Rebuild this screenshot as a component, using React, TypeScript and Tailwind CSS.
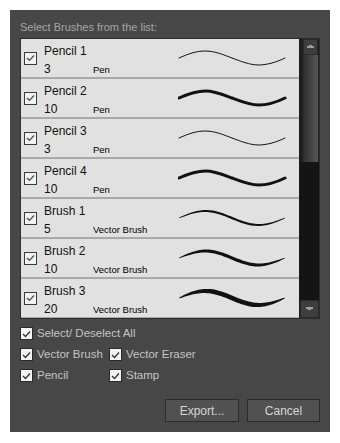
import React from "react";

type Brush = {
  name: string;
  size: number;
  kind: string;
  width: number;
  taper: boolean;
};

const brushes: Brush[] = [
  { name: "Pencil 1", size: 3, kind: "Pen", width: 1, taper: false },
  { name: "Pencil 2", size: 10, kind: "Pen", width: 3, taper: false },
  { name: "Pencil 3", size: 3, kind: "Pen", width: 1, taper: false },
  { name: "Pencil 4", size: 10, kind: "Pen", width: 3, taper: false },
  { name: "Brush 1", size: 5, kind: "Vector Brush", width: 1.8, taper: true },
  { name: "Brush 2", size: 10, kind: "Vector Brush", width: 3, taper: true },
  { name: "Brush 3", size: 20, kind: "Vector Brush", width: 4.5, taper: true },
];

const font = { fontFamily: '"Liberation Sans", Arial, sans-serif' };

// sine stroke, tapered for vector brushes
function Stroke({ width, taper }: { width: number; taper: boolean }) {
  const W = 108;
  const mid = 10;
  const amp = 7;
  if (!taper) {
    return (
      <svg width={110} height={20} viewBox="0 0 110 20">
        <path
          d="M1 10 C10 6 18 3 27.5 3 S46 7 54 10 S72 17 80.5 17 S99 14 107 10"
          fill="none"
          stroke="#111"
          strokeWidth={width}
          strokeLinecap="round"
        />
      </svg>
    );
  }
  const top: string[] = [];
  const bot: string[] = [];
  const n = 60;
  for (let i = 0; i <= n; i++) {
    const t = i / n;
    const x = 1 + t * (W - 2);
    const y = mid - amp * Math.sin(2 * Math.PI * t);
    const h = (width / 2) * Math.pow(Math.sin(Math.PI * t), 0.6) + 0.25;
    top.push(`${x.toFixed(2)},${(y - h).toFixed(2)}`);
    bot.unshift(`${x.toFixed(2)},${(y + h).toFixed(2)}`);
  }
  return (
    <svg width={110} height={20} viewBox="0 0 110 20">
      <polygon points={[...top, ...bot].join(" ")} fill="#111" />
    </svg>
  );
}

function ListCheck() {
  return (
    <div className="flex h-[13px] w-[13px] shrink-0 items-center justify-center border border-[#3c3c3c] bg-[#f2f2f2]">
      <svg width="9" height="8" viewBox="0 0 9 8">
        <path d="M1 4 L3.5 6.5 L8 1.5" fill="none" stroke="#4a4a4a" strokeWidth="1.2" />
      </svg>
    </div>
  );
}

function DarkCheck({ label }: { label: string }) {
  return (
    <div className="flex h-[13px] items-center gap-[4px]">
      <div className="flex h-[13px] w-[13px] shrink-0 items-center justify-center border border-[#2a2a2a] bg-[#f4f4f4]">
        <svg width="9" height="8" viewBox="0 0 9 8">
          <path d="M1 4 L3.5 6.5 L8 1.5" fill="none" stroke="#333" strokeWidth="1.3" />
        </svg>
      </div>
      <span className="text-[11.5px] leading-[13px] text-[#c4c4c4]">{label}</span>
    </div>
  );
}

function Row({ b }: { b: Brush }) {
  return (
    <div className="flex h-[40px] shrink-0 items-center border-b-2 border-[#a9a9a9] bg-[#e1e1e1] pl-[3px]">
      <ListCheck />
      <div className="ml-[7px] mt-[4px] flex w-[134px] flex-col text-[#111]">
        <span className="text-[12px] leading-[16px]">{b.name}</span>
        <div className="mt-[2px] flex items-baseline">
          <span className="w-[49px] text-[12px] leading-[16px]">{b.size}</span>
          <span className="text-[9.5px] leading-[16px] text-black">{b.kind}</span>
        </div>
      </div>
      <Stroke width={b.width} taper={b.taper} />
    </div>
  );
}

function ArrowBtn({ up }: { up: boolean }) {
  return (
    <svg width="7" height="4" viewBox="0 0 7 4">
      <path d={up ? "M2 0 H5 V1 H7 V3 H0 V1 H2 Z" : "M0 0 H7 V2 H5 V3 H2 V2 H0 Z"} fill="#9c9c9c" />
    </svg>
  );
}

function Scrollbar() {
  return (
    <div className="flex w-[20px] flex-col border-l border-[#1c1c1c] bg-[#1f1f1f]">
      <div className="ml-[3px] flex h-[16px] w-[15px] items-center justify-center border border-[#2a2a2a] bg-[#3e3e3e]">
        <ArrowBtn up />
      </div>
      <div className="ml-[3px] h-[107px] w-[15px] bg-gradient-to-r from-[#2e2e2e] to-[#575757]" />
      <div className="flex-1 bg-[#141414]" />
      <div className="flex h-[18px] w-full items-center justify-center border border-[#2a2a2a] bg-[#3e3e3e]">
        <ArrowBtn up={false} />
      </div>
    </div>
  );
}

export default function App() {
  return (
    <div className="h-[443px] w-[340px] overflow-hidden bg-white p-[10px]" style={font}>
      <div className="flex h-[422px] w-[320px] flex-col overflow-hidden bg-[#474747] px-[10px] pt-[10px]">
        <div className="h-[18px] shrink-0 text-[11px] leading-[14px] text-[#a6a6a6]">
          Select Brushes from the list:
        </div>

        <div className="flex h-[281px] shrink-0 border border-[#2c2c2c]">
          <div className="flex w-[278px] flex-col overflow-hidden">
            {brushes.map((b) => (
              <Row key={b.name} b={b} />
            ))}
          </div>
          <Scrollbar />
        </div>

        <div className="mt-[8px] flex flex-col gap-[8px]">
          <DarkCheck label="Select/ Deselect All" />
          <div className="flex">
            <div className="w-[89px]">
              <DarkCheck label="Vector Brush" />
            </div>
            <DarkCheck label="Vector Eraser" />
          </div>
          <div className="flex">
            <div className="w-[89px]">
              <DarkCheck label="Pencil" />
            </div>
            <DarkCheck label="Stamp" />
          </div>
        </div>

        <div className="mt-[17px] flex justify-end gap-[8px]">
          <button
            type="button"
            className="h-[23px] w-[74px] border border-[#2b2b2b] bg-[#515151] text-[12px] text-[#d6d6d6]"
          >
            Export...
          </button>
          <button
            type="button"
            className="h-[23px] w-[73px] border border-[#2b2b2b] bg-[#515151] text-[12px] text-[#d6d6d6]"
          >
            Cancel
          </button>
        </div>
      </div>
    </div>
  );
}
